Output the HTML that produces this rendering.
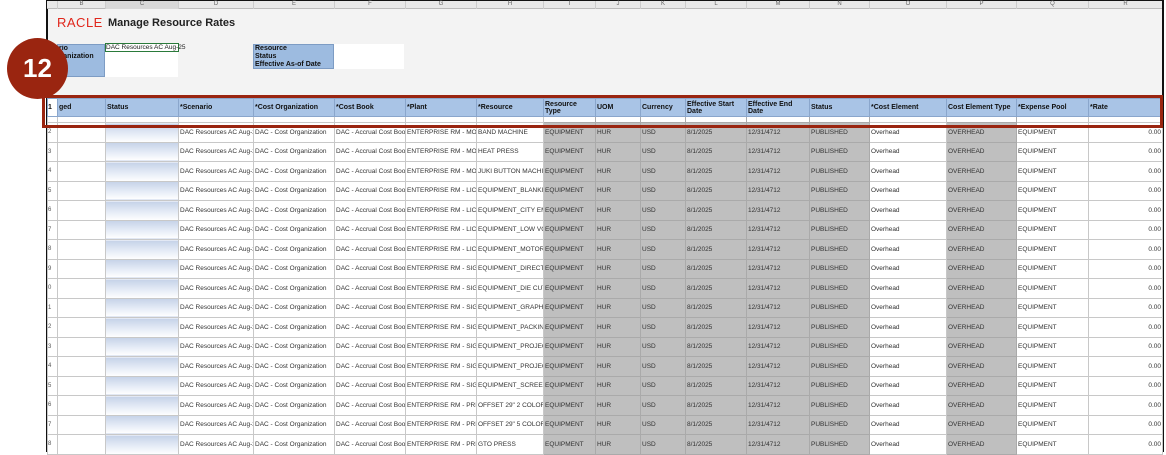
<!DOCTYPE html>
<html><head><meta charset="utf-8"><style>
*{margin:0;padding:0;box-sizing:border-box}
body{width:1166px;height:452px;background:#fff;position:relative;overflow:hidden;font-family:"Liberation Sans",Arial,sans-serif}
.sheet{position:absolute;left:46px;top:0;width:1118px;height:452px;background:#f3f3f3;border:2px solid #111;border-bottom:3px solid #111}
.colh{position:absolute;left:47px;top:1px;width:1115px;height:8px;background:#e8e8e8;border-bottom:1px solid #bbb}
.colh span{position:absolute;top:0;font-size:6px;color:#666;border-left:1px solid #ccc;height:8px;text-align:center}
.abs{position:absolute}
.lbl{background:#9dbbe0;border:1px solid #7d9cc4;font-size:7px;font-weight:bold;color:#111;line-height:8px;padding-left:1px;white-space:nowrap;overflow:hidden}
table{position:absolute;left:47px;top:98px;border-collapse:collapse;table-layout:fixed;width:1115px}
td{border:1px solid #c8c8c8;font-size:6.5px;color:#333;white-space:nowrap;overflow:hidden;padding:0 1px;height:19.5px;vertical-align:middle;background:#fff}
tr.h td{background:#a9c4e6;border-color:#8aa6cc;font-weight:bold;font-size:7px;color:#111;height:18px;white-space:normal;line-height:7px}
tr.e td{height:6px;background:#fff}
td.g{background:#bfbfbf;border-color:#aaa}
td.c{background:linear-gradient(#c5d2e8,#e8eef8 60%,#fff)}
td.n{font-size:6px;padding:0;color:#555;background:#fff}
td.r{text-align:right}
.box{position:absolute;left:42px;top:95px;width:1121px;height:33px;border:3px solid #9a2510}
.circ{position:absolute;left:7px;top:38px;width:61px;height:61px;border-radius:50%;background:#9a2510;color:#fff;font-weight:bold;font-size:26px;text-align:center;line-height:61px}
</style></head><body>
<div class="sheet"></div>
<div class="colh">
<span style="left:10px;width:48px">B</span><span style="left:58px;width:73px;background:#d8d8d8">C</span><span style="left:131px;width:75px">D</span><span style="left:206px;width:81px">E</span><span style="left:287px;width:71px">F</span><span style="left:358px;width:71px">G</span><span style="left:429px;width:67px">H</span><span style="left:496px;width:52px">I</span><span style="left:548px;width:45px">J</span><span style="left:593px;width:45px">K</span><span style="left:638px;width:61px">L</span><span style="left:699px;width:63px">M</span><span style="left:762px;width:60px">N</span><span style="left:822px;width:77px">O</span><span style="left:899px;width:70px">P</span><span style="left:969px;width:72px">Q</span><span style="left:1041px;width:74px">R</span>
</div>
<div class="abs" style="left:57px;top:15px;font-size:13px;color:#e0261b;letter-spacing:0.5px">RACLE</div>
<div class="abs" style="left:108px;top:17px;font-size:11px;font-weight:bold;color:#222">Manage Resource Rates</div>
<div class="abs lbl" style="left:57px;top:44px;width:48px;height:33px">rio<br>ganization<br>ok<br>&nbsp;</div>
<div class="abs" style="left:105px;top:44px;width:73px;height:33px;background:#fff"></div>
<div class="abs" style="left:105px;top:43px;width:74px;height:9px;border:1px solid #2a7a3a;font-size:6.5px;line-height:7px;color:#222;white-space:nowrap">DAC Resources AC Aug-25</div>
<div class="abs lbl" style="left:253px;top:44px;width:81px;height:25px">Resource<br>Status<br>Effective As-of Date</div>
<div class="abs" style="left:334px;top:44px;width:70px;height:25px;background:#fff"></div>
<table>
<colgroup><col style="width:10px"><col style="width:48px"><col style="width:73px"><col style="width:75px"><col style="width:81px"><col style="width:71px"><col style="width:71px"><col style="width:67px"><col style="width:52px"><col style="width:45px"><col style="width:45px"><col style="width:61px"><col style="width:63px"><col style="width:60px"><col style="width:77px"><col style="width:70px"><col style="width:72px"><col style="width:74px"></colgroup>
<tr class="h"><td class="n" style="background:#fff">1</td><td>ged</td><td>Status</td><td>*Scenario</td><td>*Cost Organization</td><td>*Cost Book</td><td>*Plant</td><td>*Resource</td><td>Resource Type</td><td>UOM</td><td>Currency</td><td>Effective Start Date</td><td>Effective End Date</td><td>Status</td><td>*Cost Element</td><td>Cost Element Type</td><td>*Expense Pool</td><td>*Rate</td></tr>
<tr class="e"><td class="n"></td><td></td><td></td><td></td><td></td><td></td><td></td><td></td><td class="g"></td><td class="g"></td><td class="g"></td><td class="g"></td><td class="g"></td><td class="g"></td><td></td><td class="g"></td><td></td><td></td></tr>
<tr><td class="n">2</td><td></td><td class="c"></td><td>DAC Resources AC Aug-25</td><td>DAC - Cost Organization</td><td>DAC - Accrual Cost Book</td><td>ENTERPRISE RM - MOUNT</td><td>BAND MACHINE</td><td class="g">EQUIPMENT</td><td class="g">HUR</td><td class="g">USD</td><td class="g">8/1/2025</td><td class="g">12/31/4712</td><td class="g">PUBLISHED</td><td>Overhead</td><td class="g">OVERHEAD</td><td>EQUIPMENT</td><td class="r">0.00</td></tr>
<tr><td class="n">3</td><td></td><td class="c"></td><td>DAC Resources AC Aug-25</td><td>DAC - Cost Organization</td><td>DAC - Accrual Cost Book</td><td>ENTERPRISE RM - MOUNT</td><td>HEAT PRESS</td><td class="g">EQUIPMENT</td><td class="g">HUR</td><td class="g">USD</td><td class="g">8/1/2025</td><td class="g">12/31/4712</td><td class="g">PUBLISHED</td><td>Overhead</td><td class="g">OVERHEAD</td><td>EQUIPMENT</td><td class="r">0.00</td></tr>
<tr><td class="n">4</td><td></td><td class="c"></td><td>DAC Resources AC Aug-25</td><td>DAC - Cost Organization</td><td>DAC - Accrual Cost Book</td><td>ENTERPRISE RM - MOUNT</td><td>JUKI BUTTON MACHINE</td><td class="g">EQUIPMENT</td><td class="g">HUR</td><td class="g">USD</td><td class="g">8/1/2025</td><td class="g">12/31/4712</td><td class="g">PUBLISHED</td><td>Overhead</td><td class="g">OVERHEAD</td><td>EQUIPMENT</td><td class="r">0.00</td></tr>
<tr><td class="n">5</td><td></td><td class="c"></td><td>DAC Resources AC Aug-25</td><td>DAC - Cost Organization</td><td>DAC - Accrual Cost Book</td><td>ENTERPRISE RM - LICENSE</td><td>EQUIPMENT_BLANKING</td><td class="g">EQUIPMENT</td><td class="g">HUR</td><td class="g">USD</td><td class="g">8/1/2025</td><td class="g">12/31/4712</td><td class="g">PUBLISHED</td><td>Overhead</td><td class="g">OVERHEAD</td><td>EQUIPMENT</td><td class="r">0.00</td></tr>
<tr><td class="n">6</td><td></td><td class="c"></td><td>DAC Resources AC Aug-25</td><td>DAC - Cost Organization</td><td>DAC - Accrual Cost Book</td><td>ENTERPRISE RM - LICENSE</td><td>EQUIPMENT_CITY EMB</td><td class="g">EQUIPMENT</td><td class="g">HUR</td><td class="g">USD</td><td class="g">8/1/2025</td><td class="g">12/31/4712</td><td class="g">PUBLISHED</td><td>Overhead</td><td class="g">OVERHEAD</td><td>EQUIPMENT</td><td class="r">0.00</td></tr>
<tr><td class="n">7</td><td></td><td class="c"></td><td>DAC Resources AC Aug-25</td><td>DAC - Cost Organization</td><td>DAC - Accrual Cost Book</td><td>ENTERPRISE RM - LICENSE</td><td>EQUIPMENT_LOW VOL</td><td class="g">EQUIPMENT</td><td class="g">HUR</td><td class="g">USD</td><td class="g">8/1/2025</td><td class="g">12/31/4712</td><td class="g">PUBLISHED</td><td>Overhead</td><td class="g">OVERHEAD</td><td>EQUIPMENT</td><td class="r">0.00</td></tr>
<tr><td class="n">8</td><td></td><td class="c"></td><td>DAC Resources AC Aug-25</td><td>DAC - Cost Organization</td><td>DAC - Accrual Cost Book</td><td>ENTERPRISE RM - LICENSE</td><td>EQUIPMENT_MOTORCYCLE</td><td class="g">EQUIPMENT</td><td class="g">HUR</td><td class="g">USD</td><td class="g">8/1/2025</td><td class="g">12/31/4712</td><td class="g">PUBLISHED</td><td>Overhead</td><td class="g">OVERHEAD</td><td>EQUIPMENT</td><td class="r">0.00</td></tr>
<tr><td class="n">9</td><td></td><td class="c"></td><td>DAC Resources AC Aug-25</td><td>DAC - Cost Organization</td><td>DAC - Accrual Cost Book</td><td>ENTERPRISE RM - SIGNS</td><td>EQUIPMENT_DIRECT A</td><td class="g">EQUIPMENT</td><td class="g">HUR</td><td class="g">USD</td><td class="g">8/1/2025</td><td class="g">12/31/4712</td><td class="g">PUBLISHED</td><td>Overhead</td><td class="g">OVERHEAD</td><td>EQUIPMENT</td><td class="r">0.00</td></tr>
<tr><td class="n">0</td><td></td><td class="c"></td><td>DAC Resources AC Aug-25</td><td>DAC - Cost Organization</td><td>DAC - Accrual Cost Book</td><td>ENTERPRISE RM - SIGNS</td><td>EQUIPMENT_DIE CUT L</td><td class="g">EQUIPMENT</td><td class="g">HUR</td><td class="g">USD</td><td class="g">8/1/2025</td><td class="g">12/31/4712</td><td class="g">PUBLISHED</td><td>Overhead</td><td class="g">OVERHEAD</td><td>EQUIPMENT</td><td class="r">0.00</td></tr>
<tr><td class="n">1</td><td></td><td class="c"></td><td>DAC Resources AC Aug-25</td><td>DAC - Cost Organization</td><td>DAC - Accrual Cost Book</td><td>ENTERPRISE RM - SIGNS</td><td>EQUIPMENT_GRAPHIC</td><td class="g">EQUIPMENT</td><td class="g">HUR</td><td class="g">USD</td><td class="g">8/1/2025</td><td class="g">12/31/4712</td><td class="g">PUBLISHED</td><td>Overhead</td><td class="g">OVERHEAD</td><td>EQUIPMENT</td><td class="r">0.00</td></tr>
<tr><td class="n">2</td><td></td><td class="c"></td><td>DAC Resources AC Aug-25</td><td>DAC - Cost Organization</td><td>DAC - Accrual Cost Book</td><td>ENTERPRISE RM - SIGNS</td><td>EQUIPMENT_PACKING</td><td class="g">EQUIPMENT</td><td class="g">HUR</td><td class="g">USD</td><td class="g">8/1/2025</td><td class="g">12/31/4712</td><td class="g">PUBLISHED</td><td>Overhead</td><td class="g">OVERHEAD</td><td>EQUIPMENT</td><td class="r">0.00</td></tr>
<tr><td class="n">3</td><td></td><td class="c"></td><td>DAC Resources AC Aug-25</td><td>DAC - Cost Organization</td><td>DAC - Accrual Cost Book</td><td>ENTERPRISE RM - SIGNS</td><td>EQUIPMENT_PROJECT</td><td class="g">EQUIPMENT</td><td class="g">HUR</td><td class="g">USD</td><td class="g">8/1/2025</td><td class="g">12/31/4712</td><td class="g">PUBLISHED</td><td>Overhead</td><td class="g">OVERHEAD</td><td>EQUIPMENT</td><td class="r">0.00</td></tr>
<tr><td class="n">4</td><td></td><td class="c"></td><td>DAC Resources AC Aug-25</td><td>DAC - Cost Organization</td><td>DAC - Accrual Cost Book</td><td>ENTERPRISE RM - SIGNS</td><td>EQUIPMENT_PROJECT</td><td class="g">EQUIPMENT</td><td class="g">HUR</td><td class="g">USD</td><td class="g">8/1/2025</td><td class="g">12/31/4712</td><td class="g">PUBLISHED</td><td>Overhead</td><td class="g">OVERHEAD</td><td>EQUIPMENT</td><td class="r">0.00</td></tr>
<tr><td class="n">5</td><td></td><td class="c"></td><td>DAC Resources AC Aug-25</td><td>DAC - Cost Organization</td><td>DAC - Accrual Cost Book</td><td>ENTERPRISE RM - SIGNS</td><td>EQUIPMENT_SCREENING</td><td class="g">EQUIPMENT</td><td class="g">HUR</td><td class="g">USD</td><td class="g">8/1/2025</td><td class="g">12/31/4712</td><td class="g">PUBLISHED</td><td>Overhead</td><td class="g">OVERHEAD</td><td>EQUIPMENT</td><td class="r">0.00</td></tr>
<tr><td class="n">6</td><td></td><td class="c"></td><td>DAC Resources AC Aug-25</td><td>DAC - Cost Organization</td><td>DAC - Accrual Cost Book</td><td>ENTERPRISE RM - PRINT</td><td>OFFSET 29" 2 COLOR</td><td class="g">EQUIPMENT</td><td class="g">HUR</td><td class="g">USD</td><td class="g">8/1/2025</td><td class="g">12/31/4712</td><td class="g">PUBLISHED</td><td>Overhead</td><td class="g">OVERHEAD</td><td>EQUIPMENT</td><td class="r">0.00</td></tr>
<tr><td class="n">7</td><td></td><td class="c"></td><td>DAC Resources AC Aug-25</td><td>DAC - Cost Organization</td><td>DAC - Accrual Cost Book</td><td>ENTERPRISE RM - PRINT</td><td>OFFSET 29" 5 COLOR</td><td class="g">EQUIPMENT</td><td class="g">HUR</td><td class="g">USD</td><td class="g">8/1/2025</td><td class="g">12/31/4712</td><td class="g">PUBLISHED</td><td>Overhead</td><td class="g">OVERHEAD</td><td>EQUIPMENT</td><td class="r">0.00</td></tr>
<tr><td class="n">8</td><td></td><td class="c"></td><td>DAC Resources AC Aug-25</td><td>DAC - Cost Organization</td><td>DAC - Accrual Cost Book</td><td>ENTERPRISE RM - PRINT</td><td>GTO PRESS</td><td class="g">EQUIPMENT</td><td class="g">HUR</td><td class="g">USD</td><td class="g">8/1/2025</td><td class="g">12/31/4712</td><td class="g">PUBLISHED</td><td>Overhead</td><td class="g">OVERHEAD</td><td>EQUIPMENT</td><td class="r">0.00</td></tr>
</table>
<div class="box"></div>
<div class="circ">12</div>
</body></html>
